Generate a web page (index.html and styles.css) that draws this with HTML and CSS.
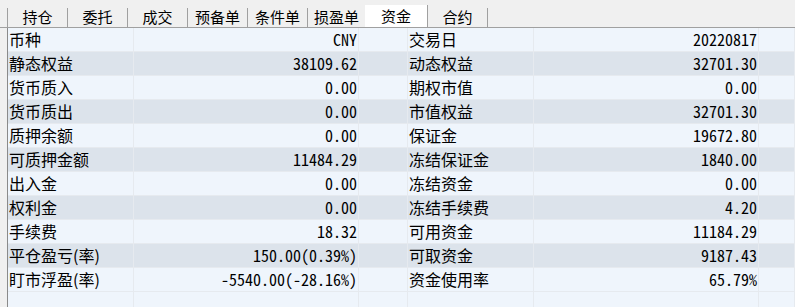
FILE: index.html
```html
<!DOCTYPE html>
<html lang="zh-CN">
<head>
<meta charset="utf-8">
<link rel="stylesheet" href="styles.css">
</head>
<body>
<div class="tabs">
  <div class="tab first">持仓</div>
  <div class="tab">委托</div>
  <div class="tab">成交</div>
  <div class="tab">预备单</div>
  <div class="tab">条件单</div>
  <div class="tab pre">损盈单</div>
  <div class="tab active">资金</div>
  <div class="tab">合约</div>
</div>
<div class="grid">
  <div class="row"><div class="c l">币种</div><div class="c v">CNY</div><div class="c"></div><div class="c l">交易日</div><div class="c v">20220817</div><div class="c"></div></div>
  <div class="row alt"><div class="c l">静态权益</div><div class="c v">38109.62</div><div class="c"></div><div class="c l">动态权益</div><div class="c v">32701.30</div><div class="c"></div></div>
  <div class="row"><div class="c l">货币质入</div><div class="c v">0.00</div><div class="c"></div><div class="c l">期权市值</div><div class="c v">0.00</div><div class="c"></div></div>
  <div class="row alt"><div class="c l">货币质出</div><div class="c v">0.00</div><div class="c"></div><div class="c l">市值权益</div><div class="c v">32701.30</div><div class="c"></div></div>
  <div class="row"><div class="c l">质押余额</div><div class="c v">0.00</div><div class="c"></div><div class="c l">保证金</div><div class="c v">19672.80</div><div class="c"></div></div>
  <div class="row alt"><div class="c l">可质押金额</div><div class="c v">11484.29</div><div class="c"></div><div class="c l">冻结保证金</div><div class="c v">1840.00</div><div class="c"></div></div>
  <div class="row"><div class="c l">出入金</div><div class="c v">0.00</div><div class="c"></div><div class="c l">冻结资金</div><div class="c v">0.00</div><div class="c"></div></div>
  <div class="row alt"><div class="c l">权利金</div><div class="c v">0.00</div><div class="c"></div><div class="c l">冻结手续费</div><div class="c v">4.20</div><div class="c"></div></div>
  <div class="row"><div class="c l">手续费</div><div class="c v">18.32</div><div class="c"></div><div class="c l">可用资金</div><div class="c v">11184.29</div><div class="c"></div></div>
  <div class="row alt"><div class="c l">平仓盈亏(率)</div><div class="c v">150.00(0.39%)</div><div class="c"></div><div class="c l">可取资金</div><div class="c v">9187.43</div><div class="c"></div></div>
  <div class="row"><div class="c l">盯市浮盈(率)</div><div class="c v">-5540.00(-28.16%)</div><div class="c"></div><div class="c l">资金使用率</div><div class="c v">65.79%</div><div class="c"></div></div>
  <div class="row last"><div class="c"></div><div class="c"></div><div class="c"></div><div class="c"></div><div class="c"></div><div class="c"></div></div>
</div>
</body>
</html>
```
FILE: styles.css
```css
html, body {
  margin: 0;
  padding: 0;
  background: #f0f0f0;
  overflow: hidden;
}
body {
  font-family: "Noto Sans CJK SC", sans-serif;
  color: #000;
}
.tabs {
  display: flex;
  align-items: flex-end;
  height: 27px;
  padding-left: 7px;
  border-bottom: 1px solid #a0a0a0;
}
.tab {
  box-sizing: border-box;
  width: 60px;
  height: 19px;
  border-right: 1px solid #a0a0a0;
  font-size: 15px;
  line-height: 18px;
  text-align: center;
}
.tab.first {
  width: 61px;
  border-left: 1px solid #a0a0a0;
}
.tab.pre {
  width: 57px;
  border-right: none;
}
.tab.active {
  width: 63px;
  height: 22px;
  background: #fff;
  line-height: 22px;
  padding-bottom: 1px;
}
.grid {
  margin-left: 7px;
  border-left: 1px solid #8a8a8a;
  background: #eff5fc;
}
.row {
  display: grid;
  grid-template-columns: 126px 225px 49px 126px 225px 1fr;
  height: 24px;
  box-sizing: border-box;
  border-bottom: 1px solid #e6eaef;
  background: #eff5fc;
}
.row.alt {
  background: #dce3eb;
}
.row.last {
  height: 15px;
  border-bottom: none;
}
.c {
  border-right: 1px solid #e6eaef;
  white-space: nowrap;
  overflow: hidden;
  line-height: 23px;
}
.l {
  font-size: 16px;
  padding-left: 1px;
}
.v {
  font-family: "Noto Sans Mono CJK SC", "Liberation Mono", monospace;
  font-size: 16px;
  text-align: right;
  padding-right: 1px;
}
```
